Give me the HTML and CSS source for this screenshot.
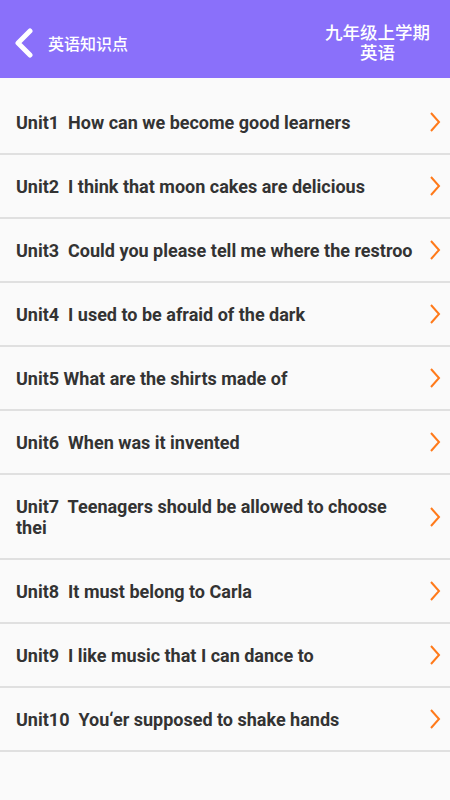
FILE: index.html
```html
<!DOCTYPE html>
<html lang="zh-CN">
<head>
    <meta charset="UTF-8">
    <meta name="viewport" content="width=device-width, initial-scale=1.0">
    <title>英语知识点</title>
    <link rel="stylesheet" href="styles.css">
</head>
<body>

    <!-- Top bar -->
    <div class="header">
        <div class="back">
            <svg class="back-icon" width="22" height="30" viewBox="0 0 22 30">
                <path d="M17 3 L5 15 L17 27" fill="none" stroke="#fff" stroke-width="5" stroke-linecap="round" stroke-linejoin="round"/>
            </svg>
            <span class="back-title">英语知识点</span>
        </div>
        <div class="grade">
            <div>九年级上学期</div>
            <div>英语</div>
        </div>
    </div>

    <!-- Unit list -->
    <ul class="unit-list">
        <li class="unit"><span class="unit-name">Unit1  How can we become good learners</span><svg class="arrow" width="12" height="20" viewBox="0 0 12 20"><path d="M2 1 L10 10 L2 19" fill="none" stroke="#ff7a1a" stroke-width="2"/></svg></li>
        <li class="unit"><span class="unit-name">Unit2  I think that moon cakes are delicious</span><svg class="arrow" width="12" height="20" viewBox="0 0 12 20"><path d="M2 1 L10 10 L2 19" fill="none" stroke="#ff7a1a" stroke-width="2"/></svg></li>
        <li class="unit"><span class="unit-name">Unit3  Could you please tell me where the restroo</span><svg class="arrow" width="12" height="20" viewBox="0 0 12 20"><path d="M2 1 L10 10 L2 19" fill="none" stroke="#ff7a1a" stroke-width="2"/></svg></li>
        <li class="unit"><span class="unit-name">Unit4  I used to be afraid of the dark</span><svg class="arrow" width="12" height="20" viewBox="0 0 12 20"><path d="M2 1 L10 10 L2 19" fill="none" stroke="#ff7a1a" stroke-width="2"/></svg></li>
        <li class="unit"><span class="unit-name">Unit5 What are the shirts made of</span><svg class="arrow" width="12" height="20" viewBox="0 0 12 20"><path d="M2 1 L10 10 L2 19" fill="none" stroke="#ff7a1a" stroke-width="2"/></svg></li>
        <li class="unit"><span class="unit-name">Unit6  When was it invented</span><svg class="arrow" width="12" height="20" viewBox="0 0 12 20"><path d="M2 1 L10 10 L2 19" fill="none" stroke="#ff7a1a" stroke-width="2"/></svg></li>
        <li class="unit"><span class="unit-name">Unit7  Teenagers should be allowed to choose thei</span><svg class="arrow" width="12" height="20" viewBox="0 0 12 20"><path d="M2 1 L10 10 L2 19" fill="none" stroke="#ff7a1a" stroke-width="2"/></svg></li>
        <li class="unit"><span class="unit-name">Unit8  It must belong to Carla</span><svg class="arrow" width="12" height="20" viewBox="0 0 12 20"><path d="M2 1 L10 10 L2 19" fill="none" stroke="#ff7a1a" stroke-width="2"/></svg></li>
        <li class="unit"><span class="unit-name">Unit9  I like music that I can dance to</span><svg class="arrow" width="12" height="20" viewBox="0 0 12 20"><path d="M2 1 L10 10 L2 19" fill="none" stroke="#ff7a1a" stroke-width="2"/></svg></li>
        <li class="unit"><span class="unit-name">Unit10  You‘er supposed to shake hands</span><svg class="arrow" width="12" height="20" viewBox="0 0 12 20"><path d="M2 1 L10 10 L2 19" fill="none" stroke="#ff7a1a" stroke-width="2"/></svg></li>
    </ul>

</body>
</html>
```

FILE: styles.css
```css
/* General page styling */
body {
    margin: 0;
    background: #fafafa;
    font-family: Roboto, "Noto Sans CJK SC", sans-serif;
}

/* Purple top bar */
.header {
    height: 78px;
    background: #8a70fa;
    color: #fff;
    display: flex;
    align-items: center;
    justify-content: space-between;
    padding: 0 20px 0 13px;
    box-sizing: border-box;
}

.back {
    display: flex;
    align-items: center;
    gap: 13px;
    margin-top: 7px;
}

.back-icon {
    display: block;
}

.back-title {
    font-family: "Noto Sans CJK SC", sans-serif;
    font-size: 16px;
    font-weight: 500;
}

.grade {
    font-family: "Noto Sans CJK SC", sans-serif;
    font-size: 17.5px;
    font-weight: 500;
    line-height: 20px;
    text-align: center;
    margin-top: 6px;
}

/* Unit list */
.unit-list {
    list-style: none;
    margin: 0;
    padding: 13px 0 0;
}

.unit {
    display: flex;
    align-items: center;
    justify-content: space-between;
    min-height: 62px;
    padding: 0 9px 0 16px;
    border-bottom: 2px solid #e0e0e0;
}

.unit-name {
    width: 400px;
    font-size: 18px;
    font-weight: 700;
    color: #333;
    white-space: pre-wrap;
    line-height: 21px;
    padding: 21px 0 20px;
}

/* Orange chevron */
.arrow {
    display: block;
    flex-shrink: 0;
}
```
